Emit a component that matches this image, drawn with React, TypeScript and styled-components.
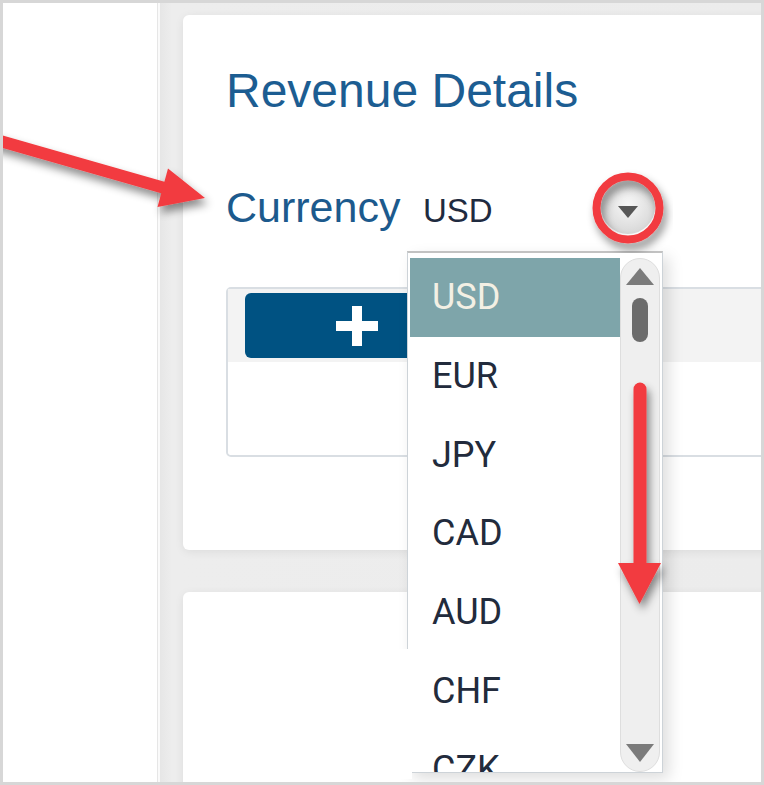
import React from 'react';
import styled, { createGlobalStyle } from 'styled-components';

const currencies = ['USD', 'EUR', 'JPY', 'CAD', 'AUD', 'CHF', 'CZK'];

const GlobalStyle = createGlobalStyle`
  html, body {
    margin: 0;
    padding: 0;
    background: #fff;
  }
  body {
    font-family: "Liberation Sans", Arial, sans-serif;
  }
`;

const Annotations: React.FC = () => (
  <Overlay width="764" height="785" viewBox="0 0 764 785">
    <defs>
      <filter id="drop" x="-20%" y="-20%" width="140%" height="140%">
        <feDropShadow dx="3" dy="6" stdDeviation="4" floodColor="#000" floodOpacity="0.45" />
      </filter>
    </defs>
    <rect x="186" y="649" width="226" height="130" fill="#fff" />
    <g filter="url(#drop)" fill="#f23b3f">
      <line x1="-12" y1="137.5" x2="168" y2="189" stroke="#f23b3f" strokeWidth="12" />
      <polygon points="205,198 168,168.5 157.5,207" />
    </g>
    <g filter="url(#drop)" fill="#f23b3f">
      <line x1="640" y1="389" x2="640" y2="570" stroke="#f23b3f" strokeWidth="13" strokeLinecap="round" />
      <polygon points="618,563 661,563 639.5,604" />
    </g>
    <circle cx="628" cy="208" r="31.5" fill="none" stroke="#f23b3f" strokeWidth="8" filter="url(#drop)" />
  </Overlay>
);

const App: React.FC = () => (
  <>
    <GlobalStyle />
    <Frame>
      <Sidebar />
      <Main>
        <Card>
          <Title>Revenue Details</Title>
          <CurrencyRow>
            <Label>Currency</Label>
            <Select>
              <SelectValue>USD</SelectValue>
              <ArrowButton>
                <Caret />
              </ArrowButton>
              <Dropdown>
                <Options>
                  {currencies.map((c, i) => (
                    <Option key={c} $selected={i === 0}>{c}</Option>
                  ))}
                </Options>
                <ScrollTrack>
                  <ScrollArrow $dir="up" />
                  <ScrollThumb />
                  <ScrollArrow $dir="down" />
                </ScrollTrack>
              </Dropdown>
            </Select>
          </CurrencyRow>
          <Grid>
            <GridHeader>
              <AddButton>
                <svg width="42" height="40" viewBox="0 0 42 40">
                  <rect x="16" y="0" width="10" height="40" fill="#fff" />
                  <rect x="0" y="15" width="42" height="10" fill="#fff" />
                </svg>
              </AddButton>
            </GridHeader>
            <GridBody />
          </Grid>
        </Card>
        <Card $second />
      </Main>
      <Annotations />
    </Frame>
  </>
);

const Frame = styled.div`
  position: relative;
  width: 764px;
  height: 785px;
  box-sizing: border-box;
  border: 3px solid #d7d7d7;
  display: flex;
  overflow: hidden;
  background: #fff;
`;

const Sidebar = styled.div`
  width: 154px;
  flex: none;
  background: #fff;
  border-right: 1px solid #e6e6e6;
`;

const Main = styled.div`
  flex: 1;
  min-width: 0;
  background: linear-gradient(to right, #e6e6e6, #ededed 12px, #ececec);
  border-left: 2px solid #fafafa;
  padding: 12px 0 0 23px;
  display: flex;
  flex-direction: column;
  gap: 42px;
`;

const Card = styled.div<{ $second?: boolean }>`
  position: relative;
  width: 620px;
  height: ${(p) => (p.$second ? '220px' : '535px')};
  flex: none;
  box-sizing: border-box;
  background: #fff;
  border-radius: 6px;
  box-shadow: 0 2px 10px rgba(0, 0, 0, 0.07);
  padding: 52px 0 0 43px;
  z-index: ${(p) => (p.$second ? 1 : 2)};
`;

const Title = styled.h1`
  margin: 0;
  font-family: "Liberation Sans", Arial, sans-serif;
  font-weight: normal;
  font-size: 48px;
  line-height: 48px;
  color: #1c5d92;
  white-space: nowrap;
`;

const CurrencyRow = styled.div`
  margin-top: 70px;
  height: 50px;
  display: flex;
  align-items: flex-start;
`;

const Label = styled.div`
  width: 184px;
  flex: none;
  font-size: 43px;
  line-height: 43px;
  margin-top: 1px;
  color: #1c5a8d;
  white-space: nowrap;
`;

const Select = styled.div`
  position: relative;
  width: 252px;
  height: 50px;
  display: flex;
  align-items: center;
  justify-content: space-between;
  padding: 0 7px 0 13px;
  box-sizing: border-box;
`;

const SelectValue = styled.span`
  font-size: 33px;
  line-height: 33px;
  color: #1f2b40;
`;

const ArrowButton = styled.div`
  width: 54px;
  height: 54px;
  flex: none;
  margin-top: -6px;
  border-radius: 50%;
  background: radial-gradient(circle at 50% 45%, #f7f7f7 0%, #e0e0e0 55%, #cbcbcb 100%);
  display: flex;
  align-items: center;
  justify-content: center;
`;

const Caret = styled.div`
  width: 0;
  height: 0;
  margin-top: 10px;
  border-left: 10px solid transparent;
  border-right: 10px solid transparent;
  border-top: 12px solid #575757;
`;

const Dropdown = styled.div`
  position: absolute;
  top: 66px;
  left: -3px;
  width: 256px;
  height: 522px;
  box-sizing: border-box;
  background: #fff;
  border-top: 2px solid #c2c2c2;
  border-left: 1px solid #cdd3d8;
  border-right: 1px solid #cdd3d8;
  border-bottom: 1px solid #cdd3d8;
  padding: 5px 2px 0 2px;
  display: flex;
  overflow: hidden;
  box-shadow: 6px 6px 14px rgba(0, 0, 0, 0.13);
  z-index: 10;
`;

const Options = styled.div`
  flex: 1;
  overflow: hidden;
`;

const Option = styled.div<{ $selected?: boolean }>`
  height: 78.7px;
  padding-left: 22px;
  display: flex;
  align-items: center;
  font-family: Roboto, "Liberation Sans", sans-serif;
  font-size: 36px;
  color: ${(p) => (p.$selected ? '#f3f0e4' : '#222b3c')};
  background: ${(p) => (p.$selected ? '#7ea5aa' : 'transparent')};
`;

const ScrollTrack = styled.div`
  width: 40px;
  flex: none;
  box-sizing: border-box;
  background: #efefef;
  border: 1px solid #dedede;
  border-radius: 20px;
  display: flex;
  flex-direction: column;
  align-items: center;
  padding: 9px 0 9px;
`;

const ScrollArrow = styled.div<{ $dir: 'up' | 'down' }>`
  width: 0;
  height: 0;
  border-left: 14px solid transparent;
  border-right: 14px solid transparent;
  ${(p) =>
    p.$dir === 'up'
      ? 'border-bottom: 17px solid #7b7b7b;'
      : 'border-top: 18px solid #7b7b7b; margin-top: auto;'}
`;

const ScrollThumb = styled.div`
  width: 16px;
  height: 44px;
  margin-top: 13px;
  border-radius: 8px;
  background: #6c6c6c;
`;

const Grid = styled.div`
  margin-top: 52px;
  height: 170px;
  box-sizing: border-box;
  border: 2px solid #d9dee3;
  border-radius: 5px;
  display: flex;
  flex-direction: column;
`;

const GridHeader = styled.div`
  height: 73px;
  box-sizing: border-box;
  background: #f3f3f3;
  padding: 4px 0 4px 17px;
`;

const GridBody = styled.div`
  flex: 1;
  background: #fff;
  border-radius: 0 0 4px 4px;
`;

const AddButton = styled.div`
  width: 224px;
  height: 65px;
  border-radius: 6px;
  background: #005282;
  display: flex;
  align-items: center;
  justify-content: center;
`;

const Overlay = styled.svg`
  position: absolute;
  top: -3px;
  left: -3px;
  pointer-events: none;
  z-index: 20;
`;

export default App;
